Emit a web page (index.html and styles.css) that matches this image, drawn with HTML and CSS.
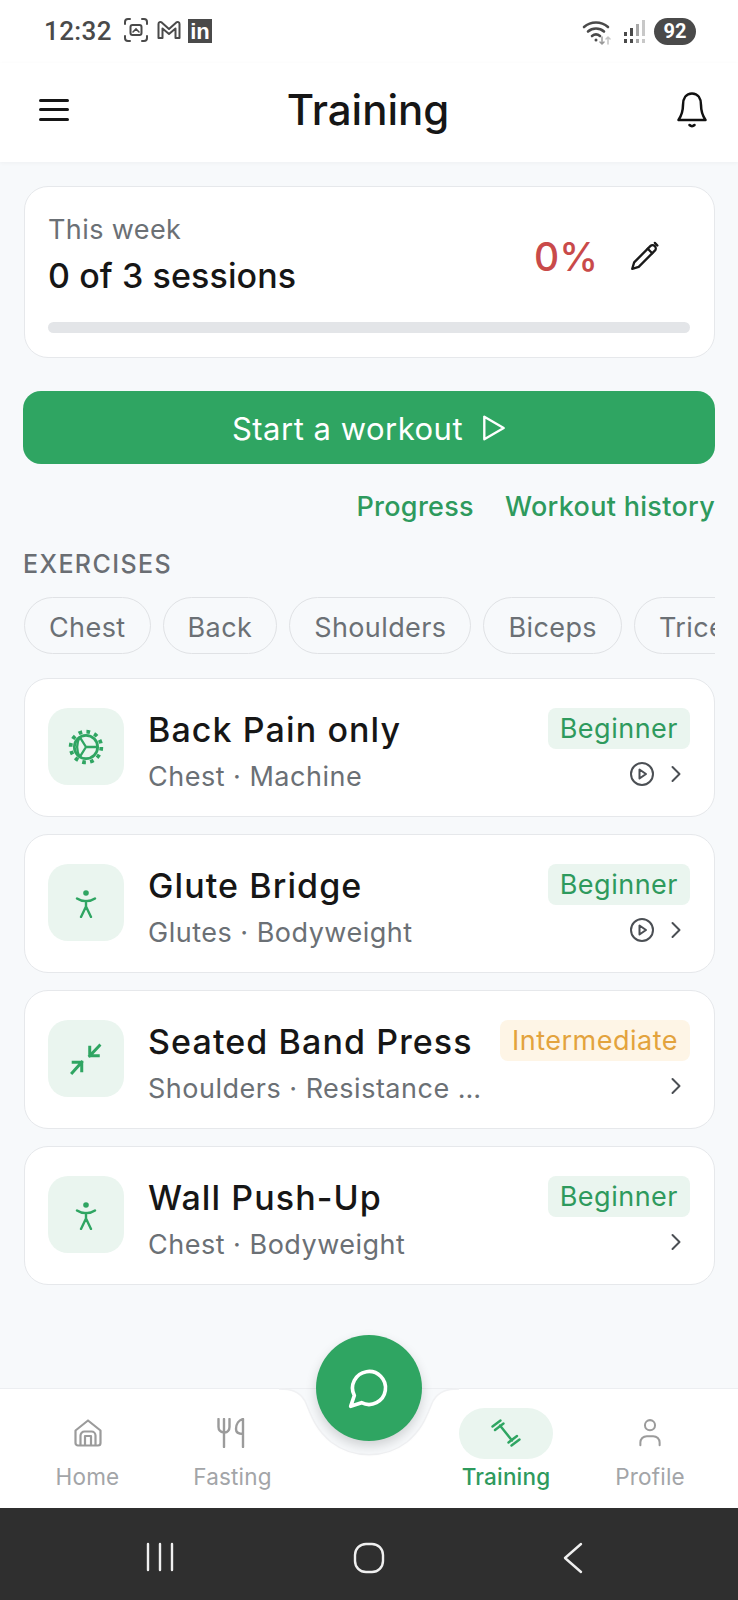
FILE: index.html
```html
<!DOCTYPE html>
<html lang="en">
<head>
  <meta charset="UTF-8" />
  <meta name="viewport" content="width=device-width, initial-scale=1.0"/>
  <title>Training</title>
  <link rel="stylesheet" href="styles.css">
</head>
<body>
  <div class="app">
    <div class="status-bar">
      <span class="clock">12:32</span>
      <svg class="st-icon" viewBox="0 0 24 24" fill="none" stroke="#4a4a4a" stroke-width="2" stroke-linecap="round">
        <path d="M1 6V4a3 3 0 0 1 3-3h2M18 1h2a3 3 0 0 1 3 3v2M23 18v2a3 3 0 0 1-3 3h-2M6 23H4a3 3 0 0 1-3-3v-2"/>
        <rect x="6.500" y="7" width="11" height="10" rx="2"/>
        <path d="M9 14l3-3 3 3" stroke-width="1.600"/>
      </svg>
      <svg class="st-icon st-mail" viewBox="0 0 24 24" fill="none" stroke="#4a4a4a" stroke-width="2" stroke-linejoin="round">
        <path d="M1.500 20V6a2 2 0 0 1 3.200-1.600L12 11l7.300-6.600A2 2 0 0 1 22.500 6v14h-4V10.500L12 16 5.500 10.500V20z"/>
      </svg>
      <span class="linkedin">in</span>
      <span class="status-right">
        <svg class="wifi" viewBox="0 0 30 26" fill="none" stroke="#4a4a4a" stroke-width="2.600" stroke-linecap="round">
          <path d="M2 8c7-6 17-6 24 0M6 12.500c4.500-4 11.500-4 16 0M10 17c2.500-2 5.500-2 8 0"/>
          <circle cx="14" cy="21" r="1.500" fill="#4a4a4a" stroke="none"/>
          <path d="M20 18v7M18 23l2 2 2-2" stroke="#9a9a9a" stroke-width="1.500"/>
          <path d="M26 25v-7M24 20l2-2 2 2" stroke="#c4c4c4" stroke-width="1.500"/>
        </svg>
        <svg class="signal" viewBox="0 0 22 24">
          <rect x="0" y="12" width="3" height="4" fill="#4a4a4a"/>
          <rect x="6" y="8" width="3" height="8" fill="#4a4a4a"/>
          <rect x="12" y="4" width="3" height="12" fill="#a8a8a8"/>
          <rect x="18" y="0" width="3" height="16" fill="#c8c8c8"/>
          <rect x="0" y="19" width="3" height="4" fill="#4a4a4a"/>
          <rect x="6" y="19" width="3" height="4" fill="#4a4a4a"/>
          <rect x="12" y="19" width="3" height="4" fill="#a8a8a8"/>
          <rect x="18" y="19" width="3" height="4" fill="#c8c8c8"/>
        </svg>
        <span class="battery">92</span>
      </span>
    </div>

    <header class="top-bar">
      <span class="menu-btn"><i></i><i></i><i></i></span>
      <h1>Training</h1>
      <svg class="bell" viewBox="0 0 30 36" fill="none" stroke="#111" stroke-width="2.500" stroke-linejoin="round" stroke-linecap="round">
        <path d="M15 1.500C9 1.500 6 6.500 6 13c0 7-1.500 10.500-4.500 15h27C25.500 23.500 24 20 24 13c0-6.500-3-11.500-9-11.500z"/>
        <path d="M12.500 33c1.500 1.500 3.500 1.500 5 0"/>
      </svg>
    </header>

    <main class="content">
      <section class="week-card">
        <div class="week-row">
          <div>
            <div class="week-label">This week</div>
            <div class="week-count">0 of 3 sessions</div>
          </div>
          <div class="week-side">
            <span class="week-pct">0%</span>
            <svg class="pencil" viewBox="0 0 24 24" fill="none" stroke="#1a1a1a" stroke-width="1.800" stroke-linecap="round" stroke-linejoin="round">
              <path d="M20 7.500a2 2 0 0 0-3.500-3.500L4 16.500 2.500 21.500 7.500 20z"/>
              <path d="M14.500 6l3.500 3.500M20 1.500l2 2"/>
            </svg>
          </div>
        </div>
        <div class="track"></div>
      </section>

      <button class="start-btn">
        Start a workout
        <svg viewBox="0 0 22 26" fill="none" stroke="#fff" stroke-width="2.200" stroke-linejoin="round"><path d="M2 2.500v21L20 13z"/></svg>
      </button>

      <div class="links">
        <a>Progress</a>
        <a>Workout history</a>
      </div>

      <h2 class="section-title">EXERCISES</h2>
      <div class="chips">
        <span class="chip">Chest</span>
        <span class="chip">Back</span>
        <span class="chip">Shoulders</span>
        <span class="chip">Biceps</span>
        <span class="chip">Triceps</span>
      </div>

      <div class="ex-list">
        <article class="ex-card">
          <div class="ex-icon">
            <svg class="ic-gear" viewBox="0 0 34 34" fill="none" stroke="#2fa562" stroke-width="2.600">
              <circle cx="17" cy="17" r="11"/>
              <circle cx="17" cy="17" r="14.500" stroke-width="3.500" stroke-dasharray="3.500 4.090"/>
              <path d="M17 17h11M17 17L11 7.500M17 17l-6 9.500M11 7.500c-3 6-3 13 0 19" stroke-width="2.200"/>
            </svg>
          </div>
          <div class="ex-body">
            <div class="ex-name">Back Pain only</div>
            <div class="ex-sub">Chest · Machine</div>
          </div>
          <div class="ex-side">
            <span class="badge">Beginner</span>
            <div class="ex-actions">
              <svg class="ic-play" viewBox="0 0 26 26" fill="none" stroke="#4b4f54" stroke-width="2" stroke-linejoin="round"><circle cx="13" cy="13" r="11"/><path d="M10.500 8.500v9l6.500-4.500z"/></svg>
              <svg class="ic-chev" viewBox="0 0 12 20" fill="none" stroke="#4b4f54" stroke-width="2" stroke-linecap="round" stroke-linejoin="round"><path d="M2.500 3l7 7-7 7"/></svg>
            </div>
          </div>
        </article>

        <article class="ex-card">
          <div class="ex-icon">
            <svg class="ic-person" viewBox="0 0 24 28" fill="none" stroke="#2fa562" stroke-width="2.400" stroke-linecap="round">
              <circle cx="12" cy="3" r="2.800" fill="#2fa562" stroke="none"/>
              <path d="M3 8.500c5 3.500 13 3.500 18 0M12 11v6M12 16.500L7 27M12 16.500L17 27"/>
            </svg>
          </div>
          <div class="ex-body">
            <div class="ex-name">Glute Bridge</div>
            <div class="ex-sub">Glutes · Bodyweight</div>
          </div>
          <div class="ex-side">
            <span class="badge">Beginner</span>
            <div class="ex-actions">
              <svg class="ic-play" viewBox="0 0 26 26" fill="none" stroke="#4b4f54" stroke-width="2" stroke-linejoin="round"><circle cx="13" cy="13" r="11"/><path d="M10.500 8.500v9l6.500-4.500z"/></svg>
              <svg class="ic-chev" viewBox="0 0 12 20" fill="none" stroke="#4b4f54" stroke-width="2" stroke-linecap="round" stroke-linejoin="round"><path d="M2.500 3l7 7-7 7"/></svg>
            </div>
          </div>
        </article>

        <article class="ex-card">
          <div class="ex-icon">
            <svg class="ic-press" viewBox="0 0 30 30" fill="none" stroke="#2fa562" stroke-width="2.800" stroke-linecap="square">
              <path d="M18.500 4v8h8M18.500 12l9-9.500M3 18h8v8M11 18l-9 10"/>
            </svg>
          </div>
          <div class="ex-body">
            <div class="ex-name">Seated Band Press</div>
            <div class="ex-sub">Shoulders · Resistance Band</div>
          </div>
          <div class="ex-side">
            <span class="badge badge-mid">Intermediate</span>
            <div class="ex-actions">
              <svg class="ic-chev" viewBox="0 0 12 20" fill="none" stroke="#4b4f54" stroke-width="2" stroke-linecap="round" stroke-linejoin="round"><path d="M2.500 3l7 7-7 7"/></svg>
            </div>
          </div>
        </article>

        <article class="ex-card">
          <div class="ex-icon">
            <svg class="ic-person" viewBox="0 0 24 28" fill="none" stroke="#2fa562" stroke-width="2.400" stroke-linecap="round">
              <circle cx="12" cy="3" r="2.800" fill="#2fa562" stroke="none"/>
              <path d="M3 8.500c5 3.500 13 3.500 18 0M12 11v6M12 16.500L7 27M12 16.500L17 27"/>
            </svg>
          </div>
          <div class="ex-body">
            <div class="ex-name">Wall Push-Up</div>
            <div class="ex-sub">Chest · Bodyweight</div>
          </div>
          <div class="ex-side">
            <span class="badge">Beginner</span>
            <div class="ex-actions">
              <svg class="ic-chev" viewBox="0 0 12 20" fill="none" stroke="#4b4f54" stroke-width="2" stroke-linecap="round" stroke-linejoin="round"><path d="M2.500 3l7 7-7 7"/></svg>
            </div>
          </div>
        </article>
      </div>
    </main>

    <nav class="bottom-nav">
      <svg class="notch" viewBox="0 0 180 68" fill="none">
        <path d="M0 1c12 0 20 2 26 12 6 14 10 28 26 41 22 17 54 17 76 0 16-13 20-27 26-41 6-10 14-12 26-12" fill="#f7f9fb" stroke="#f0f1f3" stroke-width="1.500"/>
      </svg>
      <button class="fab">
        <svg viewBox="0 0 24 24" fill="none" stroke="#fff" stroke-width="2" stroke-linecap="round" stroke-linejoin="round"><path d="M7.900 20A9 9 0 1 0 4 16.100L2 22z"/></svg>
      </button>

      <div class="nav-item">
        <span class="nav-icon">
          <svg class="ic-home" viewBox="0 0 28 28" fill="none" stroke="#9b9b9b" stroke-width="2.200" stroke-linejoin="round">
            <path d="M1.500 11.500L14 1.500l12.500 10V24a2.500 2.500 0 0 1-2.500 2.500H4A2.500 2.500 0 0 1 1.500 24z"/>
            <path d="M6.500 26V16.500a4 4 0 0 1 4-4h7a4 4 0 0 1 4 4V26M11 26V17h6v9"/>
          </svg>
        </span>
        <span class="nav-label">Home</span>
      </div>
      <div class="nav-item">
        <span class="nav-icon">
          <svg class="ic-food" viewBox="0 0 28 30" fill="none" stroke="#9b9b9b" stroke-width="2.400" stroke-linecap="round" stroke-linejoin="round">
            <path d="M1.500 1v8c0 3 2 5 5.500 5.500S12.500 12 12.500 9V1M7 1v28"/>
            <path d="M26 29V1c-4 1-7 5-7 10 0 3 2 5 7 5"/>
          </svg>
        </span>
        <span class="nav-label">Fasting</span>
      </div>
      <div class="nav-gap"></div>
      <div class="nav-item active">
        <span class="nav-icon">
          <svg class="ic-dumbbell" viewBox="0 0 30 28" fill="none" stroke="#2fa562" stroke-width="2.400" stroke-linecap="round">
            <path d="M9 6.500l12 15M1.500 7.500L9.500 1.500M4 11l8.500-6.500M17.500 23.500L26 17M20.500 26.500L28.500 20.500"/>
          </svg>
        </span>
        <span class="nav-label">Training</span>
      </div>
      <div class="nav-item">
        <span class="nav-icon">
          <svg class="ic-user" viewBox="0 0 24 30" fill="none" stroke="#9b9b9b" stroke-width="2.200" stroke-linecap="round">
            <circle cx="12" cy="7" r="5.500"/>
            <path d="M1.500 29v-3c0-4 3-7 7-7h7c4 0 7 3 7 7v3"/>
          </svg>
        </span>
        <span class="nav-label">Profile</span>
      </div>
    </nav>

    <div class="system-nav">
      <svg class="sys-bars" viewBox="0 0 28 30" stroke="#f0f0f0" stroke-width="2.400" stroke-linecap="round"><path d="M2 2v26M14 2v26M26 2v26"/></svg>
      <svg class="sys-home" viewBox="0 0 32 32" fill="none" stroke="#f0f0f0" stroke-width="2.400"><rect x="2" y="2" width="28" height="28" rx="11"/></svg>
      <svg class="sys-back" viewBox="0 0 20 32" fill="none" stroke="#f0f0f0" stroke-width="2.400" stroke-linecap="round" stroke-linejoin="round"><path d="M18 2L2 16l16 14"/></svg>
    </div>
  </div>
</body>
</html>
```

FILE: styles.css
```css
:root {
  --green: #2fa562;
  --green-text: #2e9a5d;
  --green-pale: #eaf5ef;
  --bg: #f7f9fb;
  --border: #e6e8eb;
  --muted: #6b7075;
  --ink: #161616;
}

* {
  box-sizing: border-box;
}

html, body {
  margin: 0;
  padding: 0;
}

body {
  font-family: Inter, "Liberation Sans", sans-serif;
  background-color: var(--bg);
  color: var(--ink);
}

svg {
  display: block;
  flex: none;
}

.app {
  width: 738px;
  height: 1600px;
  display: flex;
  flex-direction: column;
  overflow: hidden;
}

/* status bar */
.status-bar {
  height: 63px;
  padding: 18px 42px 0 44px;
  display: flex;
  align-items: flex-start;
  background: #fff;
}

.clock {
  font-family: Roboto, sans-serif;
  font-size: 26px;
  line-height: 26px;
  font-weight: 500;
  color: #4a4a4a;
  letter-spacing: 0.4px;
  margin-right: 12px;
}

.st-icon {
  width: 24px;
  height: 24px;
  margin-right: 8px;
}

.st-mail {
  width: 26px;
  margin-right: 6px;
}

.linkedin {
  width: 24px;
  height: 24px;
  margin-top: 1px;
  background: #4a4a4a;
  color: #fff;
  font-family: "Liberation Sans", sans-serif;
  font-weight: 700;
  font-size: 22px;
  line-height: 26px;
  text-align: center;
}

.status-right {
  margin-left: auto;
  display: flex;
  align-items: center;
  gap: 8px;
}

.wifi {
  width: 30px;
  height: 26px;
  margin-right: 4px;
}

.signal {
  width: 22px;
  height: 24px;
}

.battery {
  width: 42px;
  height: 27px;
  border-radius: 14px;
  background: #4a4a4a;
  color: #fff;
  font-family: Roboto, sans-serif;
  font-size: 20px;
  font-weight: 700;
  line-height: 27px;
  text-align: center;
}

/* header */
.top-bar {
  height: 99px;
  padding: 0 31px 6px 39px;
  display: flex;
  justify-content: space-between;
  align-items: center;
  background: #fff;
  box-shadow: 0 1px 4px rgba(0, 0, 0, 0.04);
  position: relative;
}

.top-bar h1 {
  margin: 0 10px 0 0;
  font-size: 42px;
  font-weight: 500;
  line-height: 50px;
}

.menu-btn {
  width: 30px;
  display: flex;
  flex-direction: column;
  gap: 6.500px;
}

.menu-btn i {
  display: block;
  height: 3px;
  border-radius: 2px;
  background: #161616;
}

.bell {
  width: 30px;
  height: 36px;
}

/* main */
.content {
  flex: 1;
  padding: 24px 23px 0 24px;
}

.week-card {
  height: 172px;
  padding: 25px 24px 0 23px;
  background: #fff;
  border: 1.500px solid var(--border);
  border-radius: 24px;
}

.week-row {
  display: flex;
  justify-content: space-between;
  align-items: center;
  padding-right: 30px;
}

.week-label {
  font-size: 27px;
  line-height: 36px;
  color: var(--muted);
  letter-spacing: 0.4px;
}

.week-count {
  font-size: 34px;
  line-height: 44px;
  margin-top: 6px;
  font-weight: 500;
  letter-spacing: 0.1px;
}

.week-side {
  display: flex;
  align-items: center;
  gap: 31px;
  margin-top: 2px;
}

.week-pct {
  font-size: 39px;
  font-weight: 500;
  color: #c94a4a;
}

.pencil {
  width: 31px;
  height: 31px;
}

.track {
  height: 11px;
  margin-top: 24px;
  border-radius: 6px;
  background: #e3e5e8;
}

.start-btn {
  width: 692px;
  height: 73px;
  margin: 33px 0 0 -1px;
  padding-top: 2px;
  border: 0;
  border-radius: 18px;
  background: var(--green);
  color: #fff;
  font-family: inherit;
  font-size: 31px;
  letter-spacing: 0.5px;
  display: flex;
  justify-content: center;
  align-items: center;
  gap: 19px;
}

.start-btn svg {
  width: 24px;
  height: 28px;
}

.links {
  margin-top: 23px;
  display: flex;
  justify-content: flex-end;
  gap: 31px;
}

.links a {
  font-size: 27px;
  line-height: 40px;
  font-weight: 500;
  color: var(--green-text);
  letter-spacing: 0.3px;
}

.section-title {
  margin: 20px 0 0 -1px;
  font-size: 25px;
  line-height: 34px;
  font-weight: 500;
  color: #6a6e73;
  letter-spacing: 1.4px;
}

.chips {
  margin-top: 16px;
  display: flex;
  gap: 12px;
  overflow: hidden;
}

.chip {
  flex: none;
  height: 57px;
  padding: 0 24px;
  border: 1.500px solid #e0e2e5;
  border-radius: 29px;
  font-size: 27px;
  line-height: 59px;
  color: var(--muted);
  letter-spacing: 0.4px;
}

.ex-list {
  margin-top: 24px;
  display: flex;
  flex-direction: column;
  gap: 17px;
}

.ex-card {
  height: 139px;
  padding: 29px 24px 0 23px;
  display: flex;
  align-items: flex-start;
  background: #fff;
  border: 1.500px solid var(--border);
  border-radius: 24px;
}

.ex-icon {
  width: 76px;
  height: 77px;
  border-radius: 20px;
  background: var(--green-pale);
  display: flex;
  align-items: center;
  justify-content: center;
  flex: none;
}

.ic-gear {
  width: 36px;
  height: 36px;
}

.ic-person {
  width: 24px;
  height: 28px;
  margin-top: 3px;
}

.ic-press {
  width: 32px;
  height: 32px;
}

.ex-body {
  flex: 1;
  min-width: 0;
  margin-left: 24px;
  margin-right: 16px;
}

.ex-name {
  font-size: 34px;
  line-height: 44px;
  font-weight: 500;
  letter-spacing: 1.1px;
  white-space: nowrap;
}

.ex-sub {
  margin-top: 7px;
  font-size: 27px;
  line-height: 36px;
  color: var(--muted);
  letter-spacing: 0.5px;
  white-space: nowrap;
  overflow: hidden;
  text-overflow: ellipsis;
}

.ex-side {
  flex: none;
  display: flex;
  flex-direction: column;
  align-items: flex-end;
}

.badge {
  height: 41px;
  padding: 0 12px;
  border-radius: 8px;
  background: var(--green-pale);
  color: var(--green-text);
  font-size: 27px;
  line-height: 41px;
  letter-spacing: 0.5px;
}

.badge-mid {
  background: #fef5e6;
  color: #e3a33d;
}

.ex-actions {
  margin-top: 12px;
  height: 26px;
  padding-right: 8px;
  display: flex;
  align-items: center;
  gap: 15px;
}

.ic-play {
  width: 26px;
  height: 26px;
}

.ic-chev {
  width: 12px;
  height: 20px;
}

/* bottom nav */
.bottom-nav {
  height: 120px;
  padding: 19px 0 0 15px;
  display: grid;
  grid-template-columns: 145px 145px 129px 144px 144px;
  background: #fff;
  border-top: 1px solid #eceef1;
  position: relative;
}

.notch {
  position: absolute;
  left: 279px;
  top: -1px;
  width: 180px;
  height: 68px;
}

.fab {
  position: absolute;
  left: 316px;
  top: -54px;
  width: 106px;
  height: 106px;
  padding: 0;
  border: 0;
  border-radius: 50%;
  background: var(--green);
  box-shadow: 0 5px 12px rgba(0, 0, 0, 0.16);
  display: flex;
  align-items: center;
  justify-content: center;
}

.fab svg {
  width: 44px;
  height: 44px;
}

.nav-item {
  display: flex;
  flex-direction: column;
  align-items: center;
  position: relative;
}

.nav-icon {
  width: 94px;
  height: 51px;
  border-radius: 26px;
  display: flex;
  align-items: center;
  justify-content: center;
}

.nav-icon svg {
  margin-top: -2px;
}

.active .nav-icon {
  background: var(--green-pale);
}

.nav-label {
  margin-top: 3px;
  font-size: 22.500px;
  line-height: 30px;
  color: #a3a5a8;
  letter-spacing: 0.2px;
}

.active .nav-label {
  color: var(--green-text);
  font-weight: 500;
}

.ic-home {
  width: 28px;
  height: 28px;
}

.ic-food {
  width: 28px;
  height: 30px;
  margin-left: -3px;
}

.ic-dumbbell {
  width: 30px;
  height: 28px;
}

.ic-user {
  width: 22px;
  height: 29px;
}

/* android buttons */
.system-nav {
  height: 92px;
  padding: 34px 155px 0 146px;
  display: flex;
  justify-content: space-between;
  align-items: flex-start;
  background: #2f2f2f;
}

.sys-bars {
  width: 28px;
  height: 30px;
}

.sys-home {
  width: 32px;
  height: 32px;
}

.sys-back {
  width: 20px;
  height: 32px;
}
```
